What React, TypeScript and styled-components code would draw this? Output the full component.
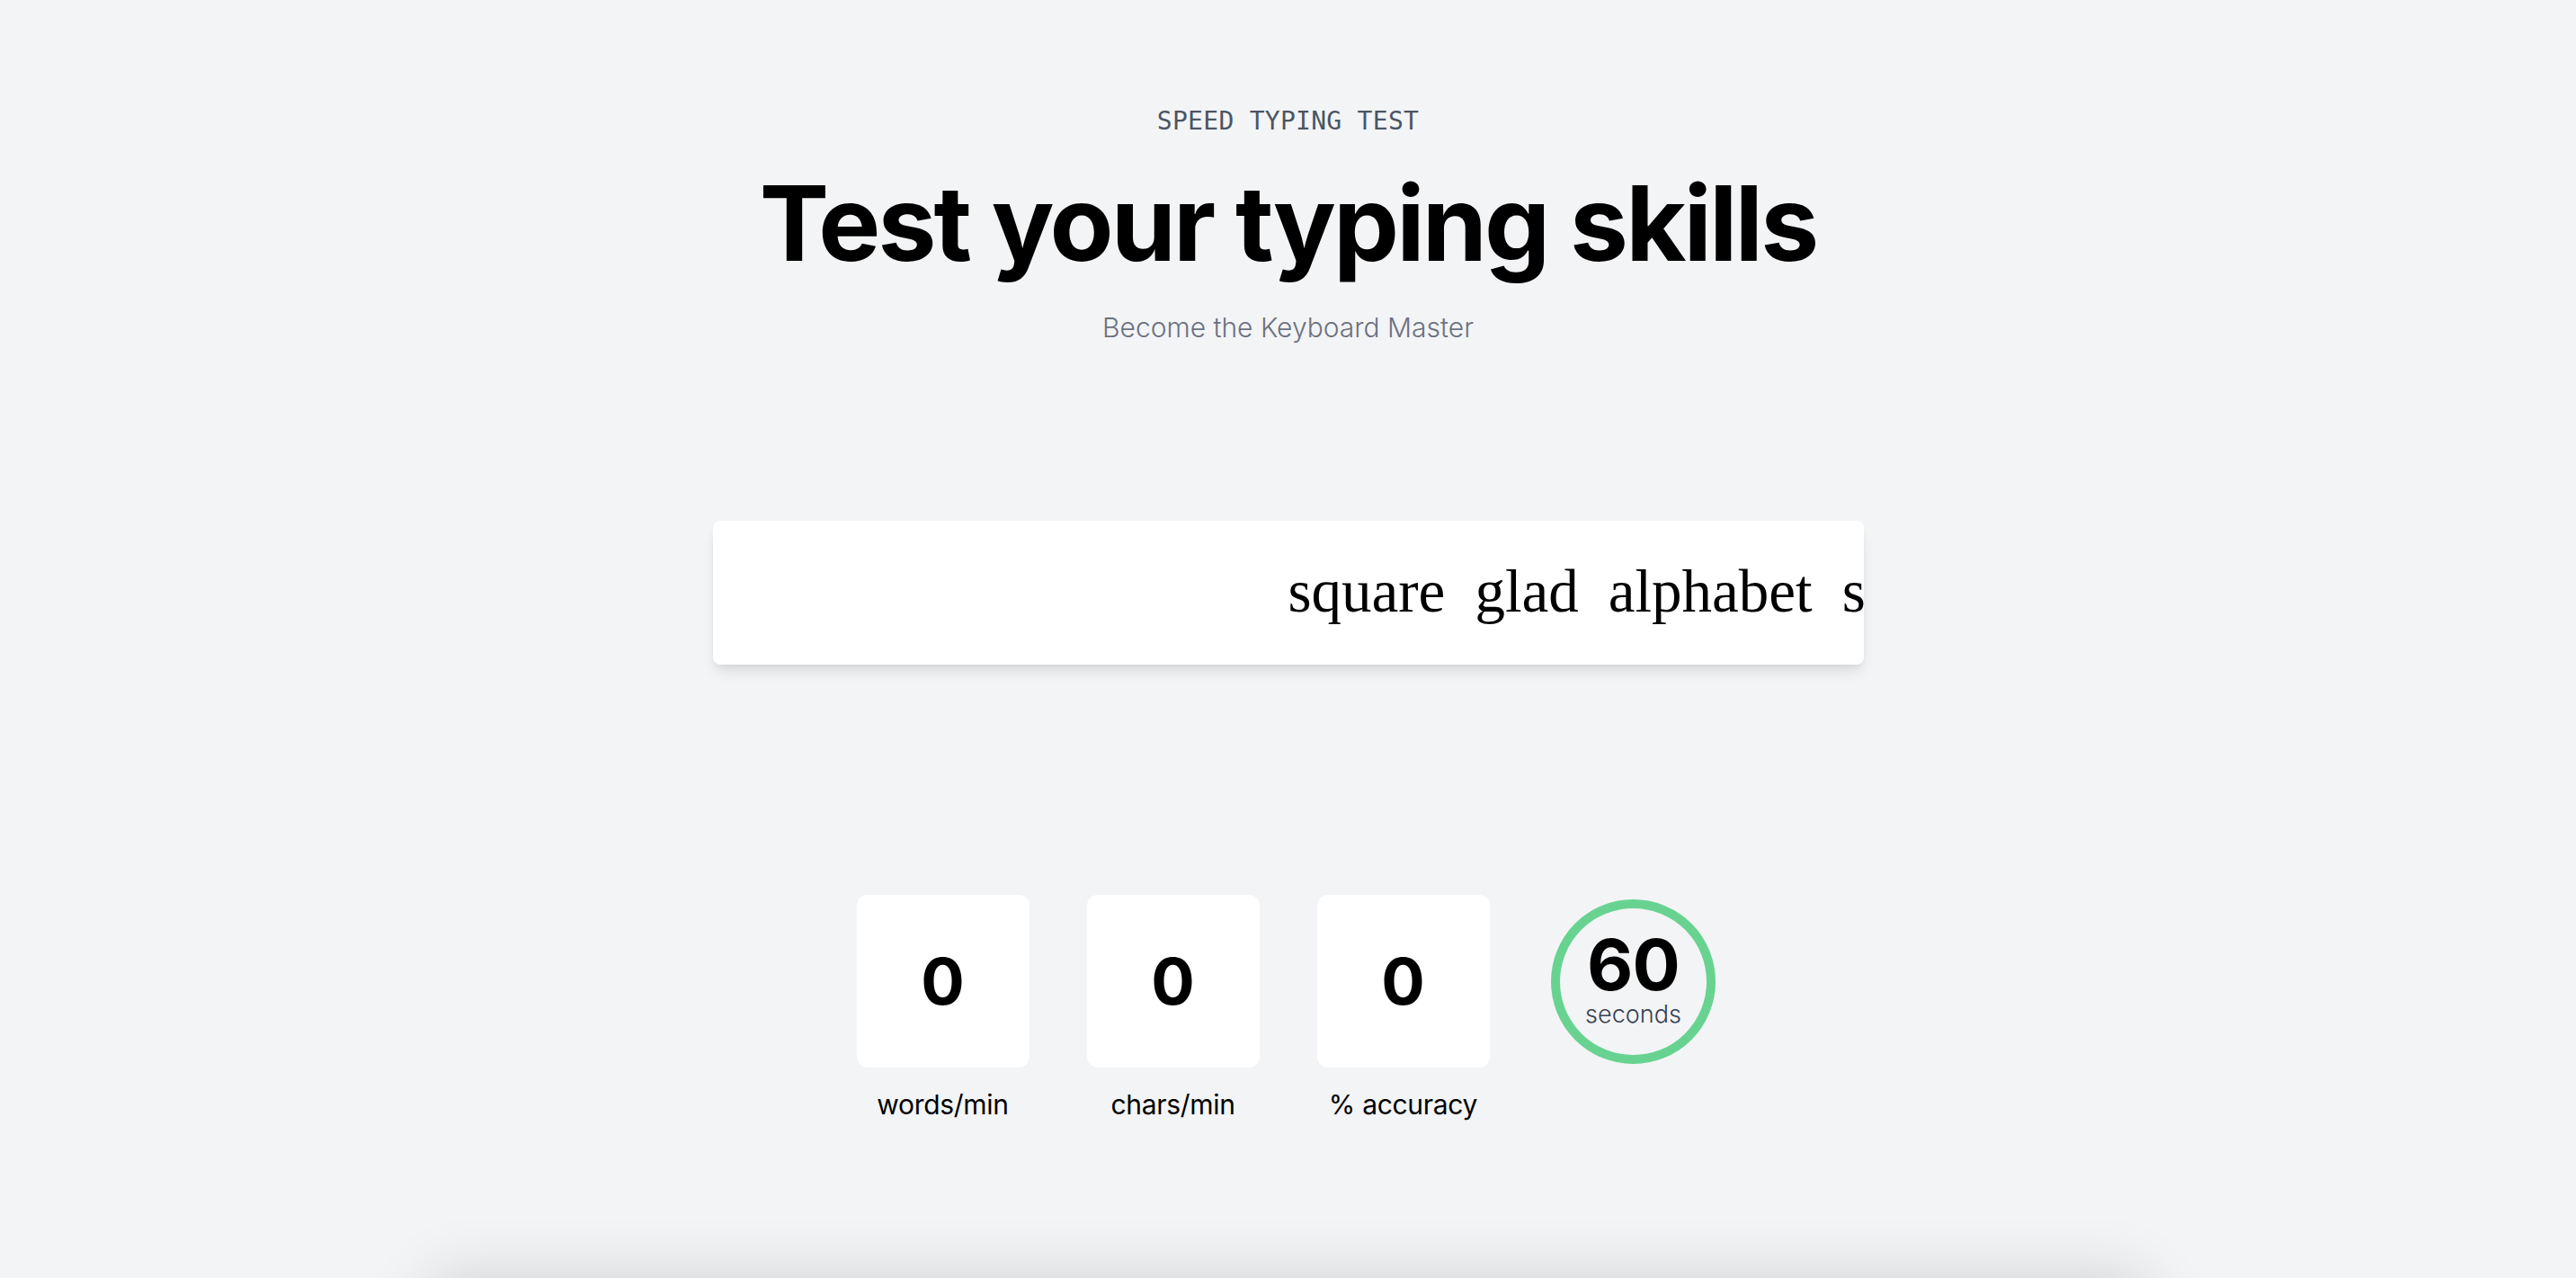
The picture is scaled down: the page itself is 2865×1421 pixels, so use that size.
import React from "react";
import styled, { createGlobalStyle } from "styled-components";

const GlobalStyle = createGlobalStyle`
  html, body {
    margin: 0;
    padding: 0;
    background: #f3f4f6;
  }
  body {
    font-family: Inter, "Noto Sans", sans-serif;
    color: #000;
    overflow: hidden;
  }
`;

const Page = styled.main`
  display: flex;
  flex-direction: column;
  align-items: center;
  padding-top: 121px;
  min-height: 100vh;
  box-sizing: border-box;
`;

const Header = styled.header`
  display: flex;
  flex-direction: column;
  align-items: center;
`;

const Eyebrow = styled.p`
  margin: 0;
  font-family: "DejaVu Sans Mono", "Liberation Mono", monospace;
  font-size: 28px;
  line-height: 28px;
  color: #4b5563;
  letter-spacing: 0.01em;
`;

const Title = styled.h1`
  margin: 41px 0 0;
  font-family: Inter, "Noto Sans", sans-serif;
  font-weight: 700;
  font-size: 116px;
  line-height: 116px;
  letter-spacing: -0.025em;
  color: #000;
`;

const Subtitle = styled.p`
  margin: 43px 0 0;
  font-family: Inter, "Noto Sans", sans-serif;
  font-weight: 300;
  font-size: 30px;
  line-height: 30px;
  color: #6b7280;
`;

const TypingBox = styled.section`
  margin-top: 200px;
  width: 1280px;
  height: 160px;
  background: #fff;
  border-radius: 8px;
  box-shadow: 0 10px 15px -3px rgba(0, 0, 0, 0.1), 0 4px 6px -2px rgba(0, 0, 0, 0.05);
  display: grid;
  grid-template-columns: 1fr 1fr;
  align-items: center;
  overflow: hidden;
  padding-bottom: 5px;
  box-sizing: border-box;
`;

const WordLine = styled.div<{ $align: "start" | "end" }>`
  display: flex;
  gap: 33px;
  justify-content: ${(p) => (p.$align === "end" ? "flex-end" : "flex-start")};
  font-family: "Liberation Serif", "Times New Roman", serif;
  font-size: 67px;
  line-height: 78px;
  color: #000;
  white-space: nowrap;
  overflow: hidden;
`;

const Word = styled.span<{ $typed?: boolean }>`
  color: ${(p) => (p.$typed ? "#9ca3af" : "#000")};
`;

const StatsRow = styled.section`
  margin-top: 256px;
  display: flex;
  gap: 64px;
  align-items: flex-start;
`;

const StatItem = styled.div`
  display: flex;
  flex-direction: column;
  align-items: center;
  width: 192px;
`;

const StatCard = styled.div`
  width: 192px;
  height: 192px;
  border-radius: 12px;
  background: #fff;
  display: flex;
  align-items: center;
  justify-content: center;
  font-family: Inter, "Noto Sans", sans-serif;
  font-weight: 700;
  font-size: 72px;
  line-height: 1;
  color: #000;
`;

const StatLabel = styled.span`
  margin-top: 26px;
  font-family: Inter, "Noto Sans", sans-serif;
  font-weight: 400;
  font-size: 30px;
  line-height: 30px;
  color: #000;
  letter-spacing: -0.01em;
`;

const TimerCell = styled.div`
  width: 192px;
  height: 192px;
  display: flex;
  align-items: center;
  justify-content: center;
`;

const TimerRing = styled.div`
  width: 183px;
  height: 183px;
  border-radius: 50%;
  border: 10px solid #68d391;
  box-sizing: border-box;
  display: flex;
  flex-direction: column;
  align-items: center;
  justify-content: center;
`;

const TimerValue = styled.span`
  font-family: Inter, "Noto Sans", sans-serif;
  font-weight: 700;
  font-size: 79px;
  line-height: 60px;
  color: #000;
  letter-spacing: -0.01em;
`;

const TimerUnit = styled.span`
  font-family: Inter, "Noto Sans", sans-serif;
  font-weight: 300;
  font-size: 27px;
  line-height: 27px;
  color: #374151;
  margin-top: 12px;
`;

const LowerPanel = styled.section`
  margin-top: 178px;
  width: 1910px;
  height: 600px;
  background: #fff;
  border-radius: 16px;
  box-shadow: 0 0 70px rgba(0, 0, 0, 0.15);
  flex-shrink: 0;
`;

const upcoming = ["square", "glad", "alphabet", "sun", "river", "gentle"];

const stats = [
  { value: 0, label: "words/min" },
  { value: 0, label: "chars/min" },
  { value: 0, label: "% accuracy" },
];

export default function App() {
  return (
    <>
      <GlobalStyle />
      <Page>
        <Header>
          <Eyebrow>SPEED TYPING TEST</Eyebrow>
          <Title>Test your typing skills</Title>
          <Subtitle>Become the Keyboard Master</Subtitle>
        </Header>

        <TypingBox>
          <WordLine $align="end" />
          <WordLine $align="start">
            {upcoming.map((w) => (
              <Word key={w}>{w}</Word>
            ))}
          </WordLine>
        </TypingBox>

        <StatsRow>
          {stats.map((s) => (
            <StatItem key={s.label}>
              <StatCard>{s.value}</StatCard>
              <StatLabel>{s.label}</StatLabel>
            </StatItem>
          ))}
          <StatItem>
            <TimerCell>
              <TimerRing>
                <TimerValue>60</TimerValue>
                <TimerUnit>seconds</TimerUnit>
              </TimerRing>
            </TimerCell>
          </StatItem>
        </StatsRow>

        <LowerPanel />
      </Page>
    </>
  );
}
